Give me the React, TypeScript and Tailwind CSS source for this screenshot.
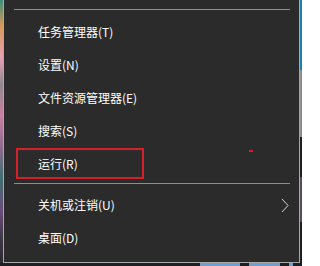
import React from "react";

type Item = { label: string; sub?: boolean; highlight?: boolean };

const topItems: Item[] = [
  { label: "任务管理器(T)" },
  { label: "设置(N)" },
  { label: "文件资源管理器(E)" },
  { label: "搜索(S)" },
  { label: "运行(R)", highlight: true },
];

const bottomItems: Item[] = [{ label: "关机或注销(U)", sub: true }, { label: "桌面(D)" }];

function Separator({ className = "" }: { className?: string }) {
  return <div className={`h-px ml-[10px] mr-[9px] bg-[#8e8e8e] ${className}`} />;
}

function MenuItem({ item }: { item: Item }) {
  return (
    <div className="relative h-[33px] flex items-center justify-between pl-[34px] pr-[10px]">
      <span className="text-[12px] leading-none text-white">{item.label}</span>
      {item.sub && (
        <svg width="8" height="15" viewBox="0 0 8 15" className="mt-[1px]">
          <path d="M1 1 L7 7.5 L1 14" fill="none" stroke="#d8d8d8" strokeWidth="1" />
        </svg>
      )}
      {item.highlight && (
        <>
          {/* annotation box drawn over the item */}
          <div className="absolute left-[12px] top-[1px] w-[128px] h-[31px] border-2 border-[#d4202a]" />
          <div className="absolute left-[245px] top-[3px] w-[4px] h-[2px] bg-[#d4202a]" />
        </>
      )}
    </div>
  );
}

export default function App() {
  return (
    <div className="w-[302px] h-[266px] overflow-hidden flex flex-col bg-[#1c1f24] font-['Noto_Sans_CJK_SC','Noto_Sans',sans-serif]">
      <div className="flex h-[263px]">
        <div className="w-[3px] bg-[linear-gradient(180deg,#3b8e7c_0%,#d89a58_10%,#e6a2b3_22%,#8e8a8e_32%,#c9809f_44%,#8c6a8e_56%,#3e7070_68%,#6c4c7c_80%,#3a3442_92%,#2a2a30_100%)]" />
        <div className="w-[297px] flex flex-col bg-[#2b2b2b] border-l border-r border-b border-[#a8a8a8]">
          <div className="pt-[9px]">
            <Separator />
          </div>
          <div className="pt-[5px]">
            {topItems.map((it) => (
              <MenuItem key={it.label} item={it} />
            ))}
          </div>
          <div className="pt-[3px] pb-[4px]">
            <Separator />
          </div>
          <div>
            {bottomItems.map((it) => (
              <MenuItem key={it.label} item={it} />
            ))}
          </div>
        </div>
        <div className="w-[2px] flex flex-col">
          <div className="h-[70px] bg-[#1b7fb1]" />
          <div className="h-[67px] bg-[#8c8c8c]" />
          <div className="h-[40px] bg-[#1f1f24]" />
          <div className="h-[45px] bg-[#5a4a5e]" />
          <div className="flex-1 bg-[#1e1e22]" />
        </div>
      </div>
      <div className="flex h-[3px]">
        <div className="w-[200px]" />
        <div className="w-[40px] bg-[#6e9fd0]" />
        <div className="w-[9px]" />
        <div className="w-[31px] bg-[#6e9fd0]" />
        <div className="w-[9px]" />
        <div className="w-[4px] bg-[#6e9fd0]" />
      </div>
    </div>
  );
}
